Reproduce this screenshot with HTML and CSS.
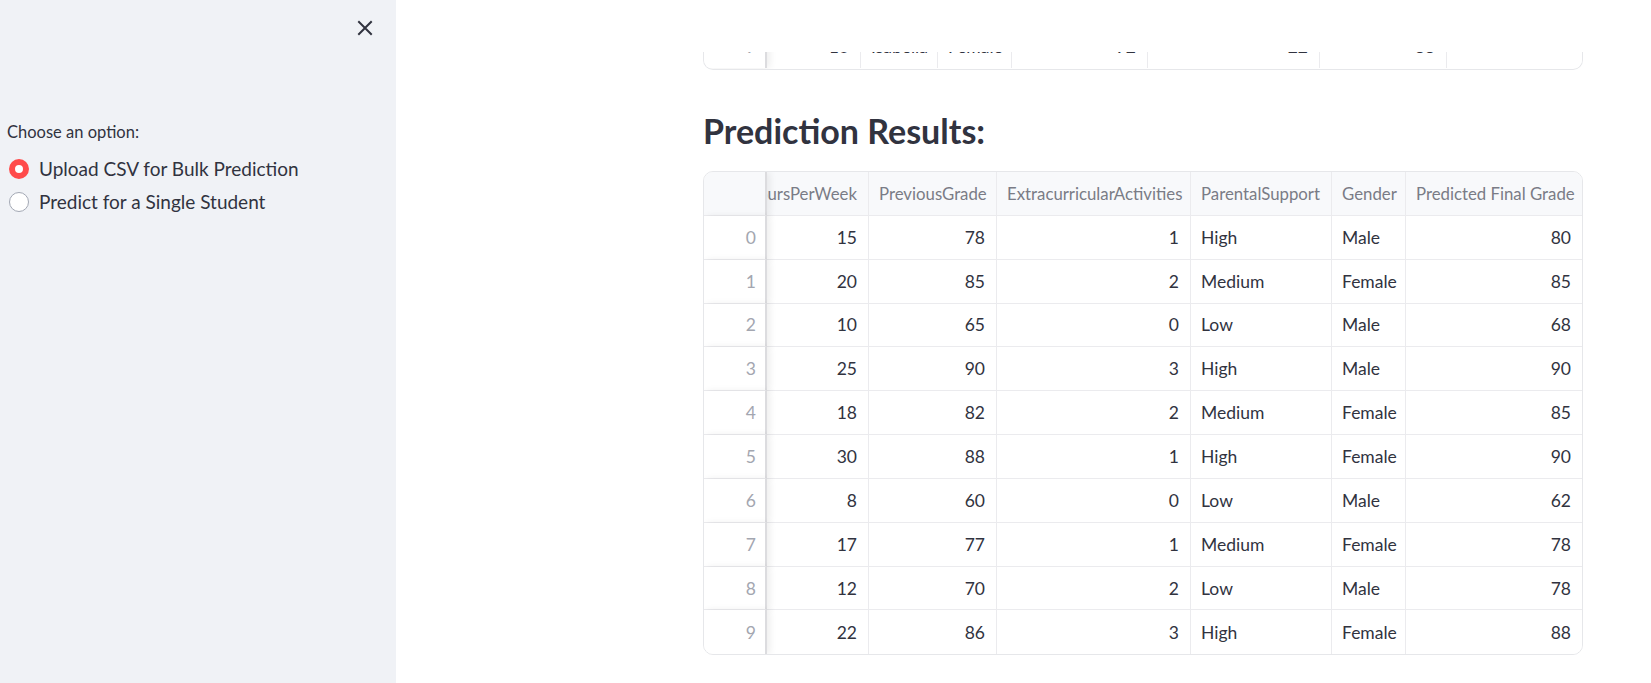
FILE: index.html
```html
<!DOCTYPE html>
<html>
<head>
<meta charset="utf-8">
<link rel="stylesheet" href="styles.css">
</head>
<body>
<aside class="sidebar">
  <div class="sidebar-top">
    <button class="close-btn" aria-label="Close sidebar">
      <svg width="16" height="16" viewBox="0 0 16 16"><path d="M2 2 L14 14 M14 2 L2 14" stroke="#31333f" stroke-width="2" stroke-linecap="square"/></svg>
    </button>
  </div>
  <div class="radio-group">
    <div class="radio-label">Choose an option:</div>
    <label class="radio-opt"><span class="radio on"></span><span>Upload CSV for Bulk Prediction</span></label>
    <label class="radio-opt"><span class="radio"></span><span>Predict for a Single Student</span></label>
  </div>
</aside>
<main class="main">
  <div class="content">
    <div class="prev-table">
      <div class="prev-row">
        <div class="c idx">9</div>
        <div class="c num">10</div>
        <div class="c">Isabella</div>
        <div class="c">Female</div>
        <div class="c num">92</div>
        <div class="c num">22</div>
        <div class="c num">88</div>
        <div class="c"></div>
      </div>
    </div>
    <h3 class="title">Prediction Results:</h3>
    <div class="grid">
      <div class="h idx"></div>
      <div class="h clip"><span>StudyHoursPerWeek</span></div>
      <div class="h">PreviousGrade</div>
      <div class="h">ExtracurricularActivities</div>
      <div class="h">ParentalSupport</div>
      <div class="h">Gender</div>
      <div class="h last">Predicted Final Grade</div>

      <div class="c idx">0</div><div class="c num">15</div><div class="c num">78</div><div class="c num">1</div><div class="c">High</div><div class="c">Male</div><div class="c num last">80</div>
      <div class="c idx">1</div><div class="c num">20</div><div class="c num">85</div><div class="c num">2</div><div class="c">Medium</div><div class="c">Female</div><div class="c num last">85</div>
      <div class="c idx">2</div><div class="c num">10</div><div class="c num">65</div><div class="c num">0</div><div class="c">Low</div><div class="c">Male</div><div class="c num last">68</div>
      <div class="c idx">3</div><div class="c num">25</div><div class="c num">90</div><div class="c num">3</div><div class="c">High</div><div class="c">Male</div><div class="c num last">90</div>
      <div class="c idx">4</div><div class="c num">18</div><div class="c num">82</div><div class="c num">2</div><div class="c">Medium</div><div class="c">Female</div><div class="c num last">85</div>
      <div class="c idx">5</div><div class="c num">30</div><div class="c num">88</div><div class="c num">1</div><div class="c">High</div><div class="c">Female</div><div class="c num last">90</div>
      <div class="c idx">6</div><div class="c num">8</div><div class="c num">60</div><div class="c num">0</div><div class="c">Low</div><div class="c">Male</div><div class="c num last">62</div>
      <div class="c idx">7</div><div class="c num">17</div><div class="c num">77</div><div class="c num">1</div><div class="c">Medium</div><div class="c">Female</div><div class="c num last">78</div>
      <div class="c idx">8</div><div class="c num">12</div><div class="c num">70</div><div class="c num">2</div><div class="c">Low</div><div class="c">Male</div><div class="c num last">78</div>
      <div class="c idx bottom">9</div><div class="c num bottom">22</div><div class="c num bottom">86</div><div class="c num bottom">3</div><div class="c bottom">High</div><div class="c bottom">Female</div><div class="c num last bottom">88</div>
    </div>
  </div>
</main>
</body>
</html>
```

FILE: styles.css
```css
* { box-sizing: border-box; }
html, body { margin: 0; padding: 0; }
body {
  display: flex;
  width: 1651px;
  height: 683px;
  overflow: hidden;
  font-family: Lato, "Noto Sans", sans-serif;
  color: #31333f;
  background: #ffffff;
}
.sidebar {
  width: 396px;
  flex: 0 0 396px;
  height: 683px;
  background: #f0f2f6;
  display: flex;
  flex-direction: column;
}
.sidebar-top {
  height: 118px;
  display: flex;
  justify-content: flex-end;
  align-items: flex-start;
  padding: 17px 20px 0 0;
}
.close-btn {
  width: 22px;
  height: 22px;
  border: 0;
  padding: 0;
  background: transparent;
  display: flex;
  align-items: center;
  justify-content: center;
}
.radio-group {
  padding-left: 7px;
  display: flex;
  flex-direction: column;
}
.radio-label {
  font-size: 16.5px;
  line-height: 28px;
  margin-bottom: 6px;
}
.radio-opt {
  display: flex;
  align-items: center;
  gap: 10px;
  font-size: 19px;
  line-height: 33px;
  height: 33px;
  padding-left: 2px;
}
.radio {
  width: 20px;
  height: 20px;
  border-radius: 50%;
  border: 1px solid #a3a8b4;
  background: #ffffff;
  flex: 0 0 20px;
}
.radio.on {
  border: 6px solid #ff4b4b;
  background: #ffffff;
}
.main {
  flex: 1;
  height: 683px;
}
.content {
  width: 880px;
  margin-left: 307px;
  padding-top: 52px;
}
.prev-table {
  height: 18px;
  overflow: hidden;
  border: 1px solid #e6e7ea;
  border-top: 0;
  border-radius: 0 0 10px 10px;
}
.prev-row {
  display: grid;
  grid-template-columns: 63px 94px 77px 74px 136px 172px 127px 135px;
  height: 44px;
  margin-top: -28px;
  font-size: 17.5px;
}
.prev-row .c { border-bottom: 0; }
.prev-row .c:last-child { border-right: 0; }
.title {
  margin: 0;
  padding-top: 41px;
  height: 101px;
  font-size: 34px;
  font-weight: 700;
  line-height: 40px;
  color: #31333f;
}
.grid {
  display: grid;
  grid-template-columns: 63px 102px 128px 194px 141px 74px 176px;
  grid-auto-rows: 43.85px;
  border: 1px solid #e6e7ea;
  border-radius: 10px;
  overflow: hidden;
  font-size: 17.5px;
}
.h, .c {
  display: flex;
  align-items: center;
  padding: 0 11px 0 10px;
  border-right: 1px solid #ebebee;
  border-bottom: 1px solid #ebebee;
  white-space: nowrap;
  overflow: hidden;
}
.h {
  background: #f8f9fb;
  color: #7a7c86;
  font-size: 16.8px;
}
.h.clip { justify-content: flex-end; }
.c { color: #31333f; background: #fff; }
.num { justify-content: flex-end; }
.idx {
  justify-content: flex-end;
  color: #a3a6b0;
  position: relative;
  z-index: 1;
  border-right: 2px solid #dcdcdf;
  box-shadow: 3px 0 7px rgba(0, 0, 0, 0.07);
  padding-right: 9px;
}
.h.idx { background: #f8f9fb; }
.last { border-right: 0; }
.bottom { border-bottom: 0; }
```
